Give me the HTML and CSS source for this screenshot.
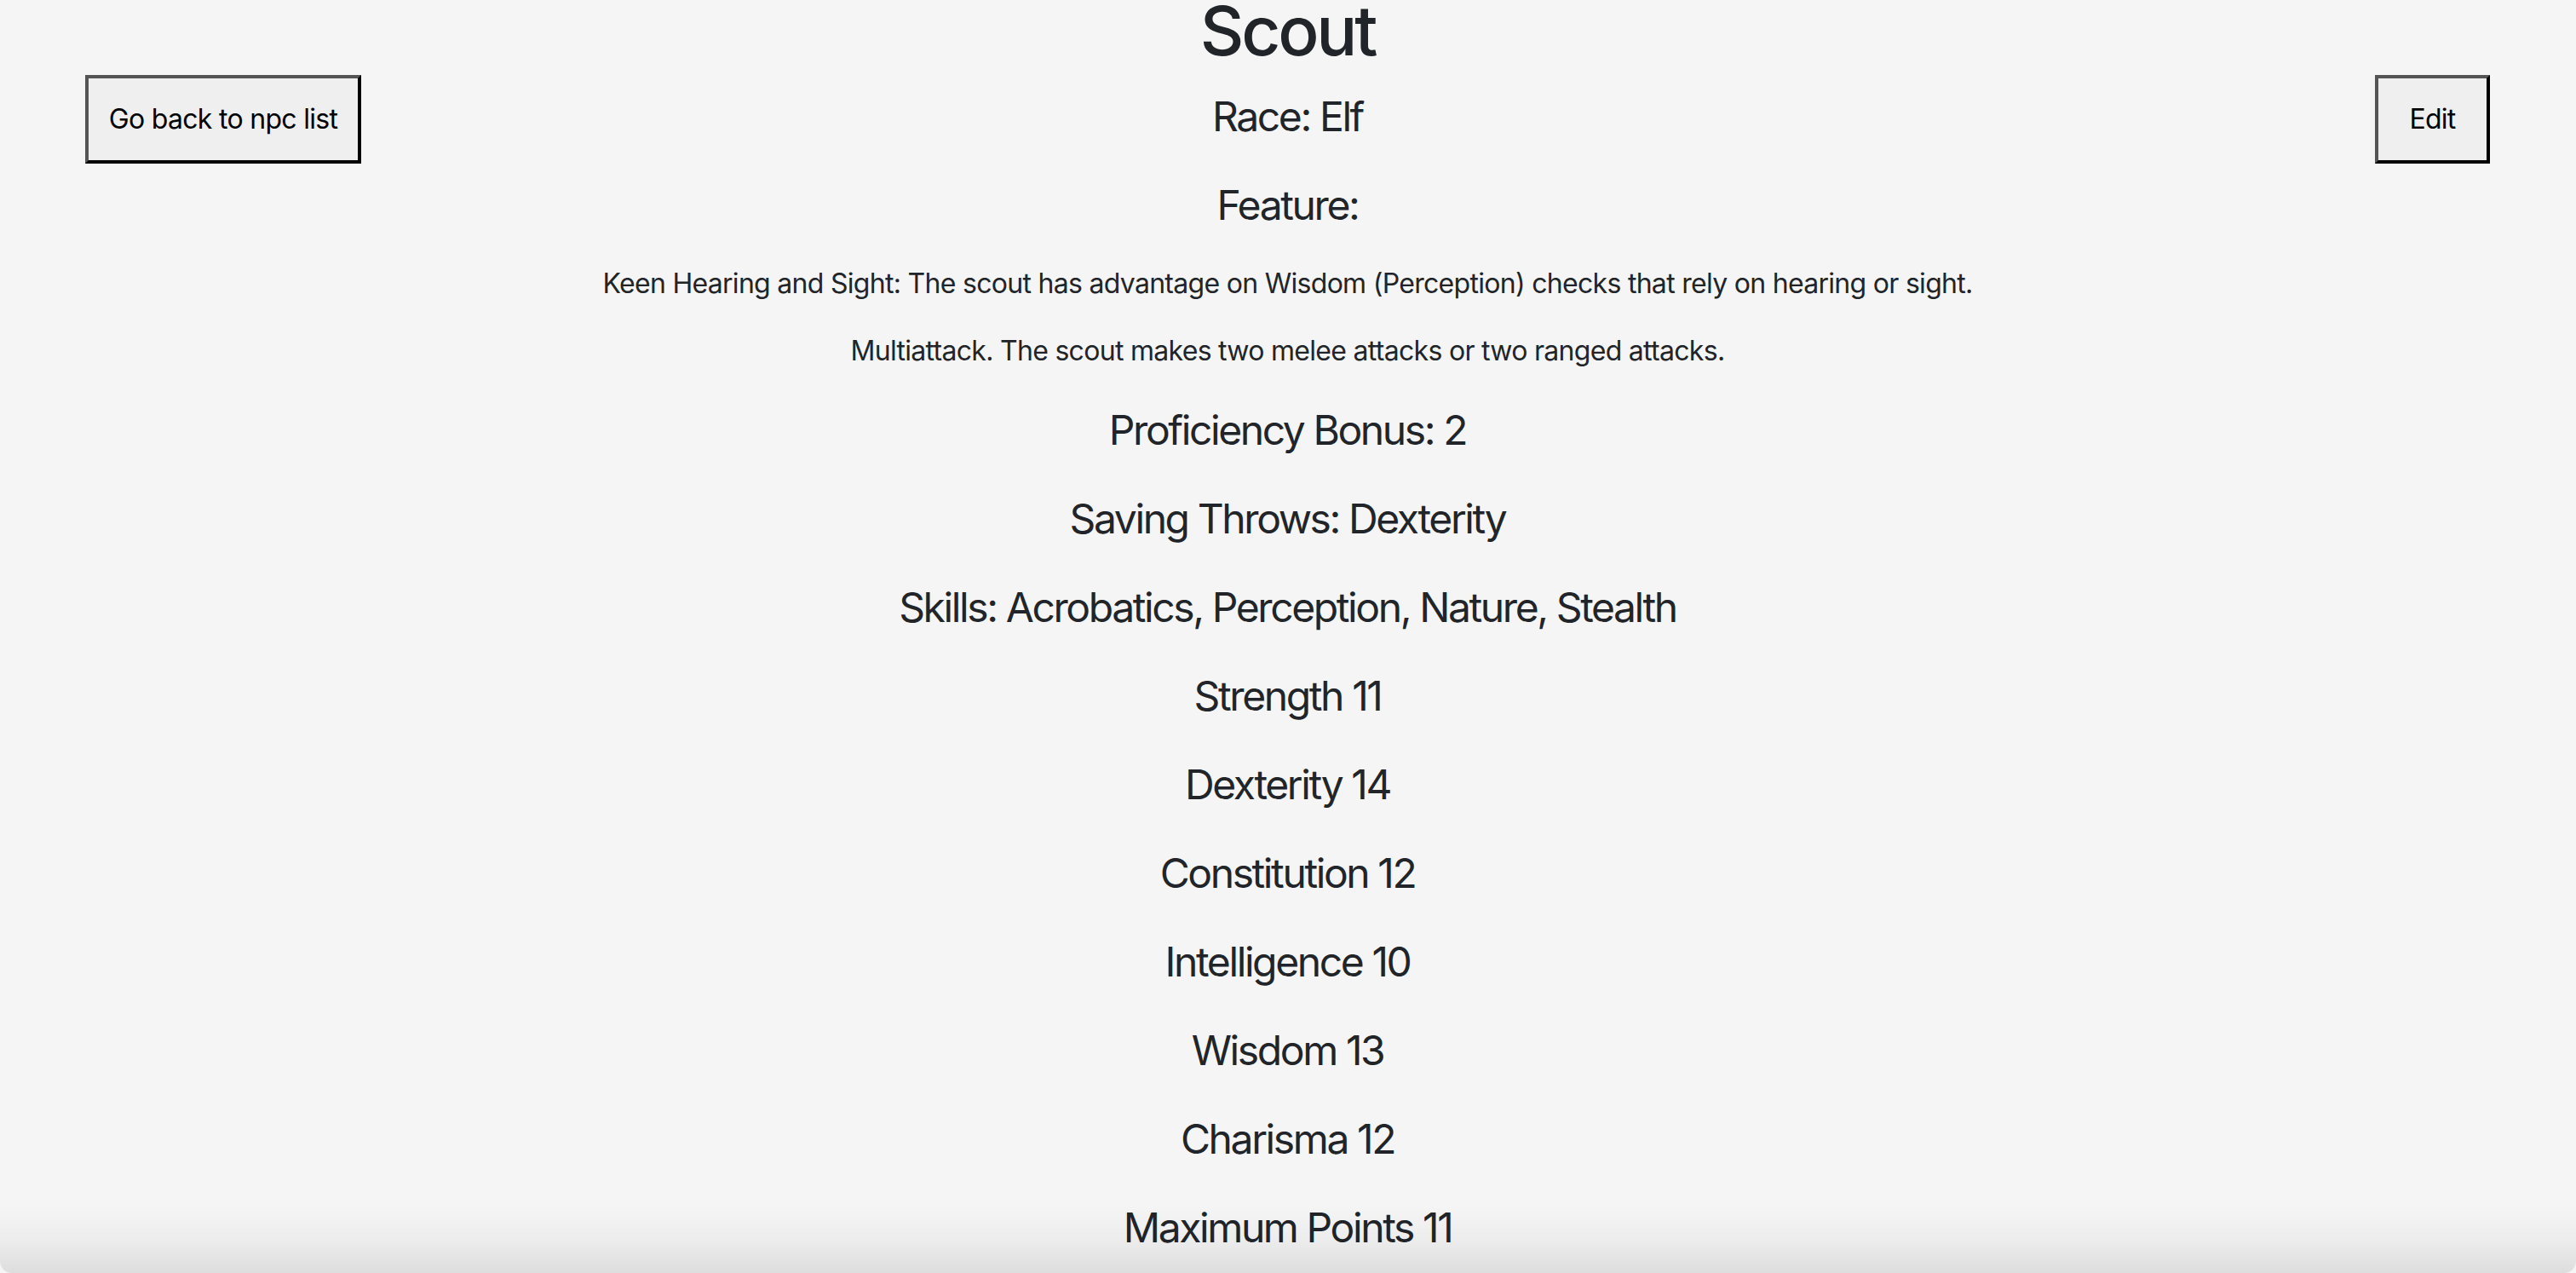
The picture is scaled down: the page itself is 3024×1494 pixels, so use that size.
FILE: index.html
```html
<!DOCTYPE html>
<html lang="en">
<head>
<meta charset="utf-8">
<title>Scout</title>
<link rel="stylesheet" href="styles.css">
</head>
<body>
<div class="page">
  <div class="side side-left">
    <button class="btn btn-back" type="button">Go back to npc list</button>
  </div>
  <main class="sheet">
    <h1 class="name">Scout</h1>
    <h4 class="stat">Race: Elf</h4>
    <h4 class="stat feature-title">Feature:</h4>
    <p class="feature">Keen Hearing and Sight: The scout has advantage on Wisdom (Perception) checks that rely on hearing or sight.</p>
    <p class="feature feature-last">Multiattack. The scout makes two melee attacks or two ranged attacks.</p>
    <h4 class="stat">Proficiency Bonus: 2</h4>
    <h4 class="stat">Saving Throws: Dexterity</h4>
    <h4 class="stat">Skills: Acrobatics, Perception, Nature, Stealth</h4>
    <h4 class="stat">Strength 11</h4>
    <h4 class="stat">Dexterity 14</h4>
    <h4 class="stat">Constitution 12</h4>
    <h4 class="stat">Intelligence 10</h4>
    <h4 class="stat">Wisdom 13</h4>
    <h4 class="stat">Charisma 12</h4>
    <h4 class="stat">Maximum Points 11</h4>
  </main>
  <div class="side side-right">
    <button class="btn btn-edit" type="button">Edit</button>
  </div>
</div>
<div class="window-shade"></div>
</body>
</html>
```

FILE: styles.css
```css
html, body {
  margin: 0;
  padding: 0;
  height: 100%;
  overflow: hidden;
}

body {
  background: #f5f5f5;
  color: #212529;
  font-family: Inter, "Noto Sans", "Liberation Sans", sans-serif;
}

.page {
  display: grid;
  grid-template-columns: 1fr auto 1fr;
  padding: 0 101px 0 100px;
}

.side {
  display: flex;
  align-items: flex-start;
}

.side-left {
  justify-content: flex-start;
}

.side-right {
  justify-content: flex-end;
}

.btn {
  margin-top: 88px;
  height: 104px;
  box-sizing: border-box;
  padding: 0;
  background: #efefef;
  color: #000;
  font-family: Inter, "Noto Sans", "Liberation Sans", sans-serif;
  font-size: 32px;
  line-height: 40px;
  letter-spacing: -0.022em;
  border-style: solid;
  border-width: 4px;
  border-color: #555 #000 #000 #555;
}

.btn-back {
  width: 324px;
}

.btn-edit {
  width: 135px;
}

.sheet {
  display: flex;
  flex-direction: column;
  align-items: center;
  text-align: center;
}

.name {
  margin: 0 0 36px;
  font-size: 80px;
  font-weight: 500;
  line-height: 72px;
  letter-spacing: -0.04em;
}

.stat {
  margin: 0 0 46.4px;
  font-size: 48px;
  font-weight: 400;
  line-height: 57.6px;
  letter-spacing: -0.05em;
}

.stat:last-child {
  margin-bottom: 0;
}

.feature-title {
  margin-bottom: 39px;
}

.feature {
  margin: 0 0 31px;
  font-size: 32px;
  line-height: 48px;
  letter-spacing: -0.022em;
}

.feature-last {
  margin-bottom: 40.3px;
}

.window-shade {
  position: fixed;
  left: 0;
  right: 0;
  bottom: 0;
  height: 80px;
  pointer-events: none;
  background: linear-gradient(to bottom, rgba(0, 0, 0, 0), rgba(0, 0, 0, 0.03) 50%, rgba(0, 0, 0, 0.095));
  border-radius: 0 0 14px 14px;
}
```
